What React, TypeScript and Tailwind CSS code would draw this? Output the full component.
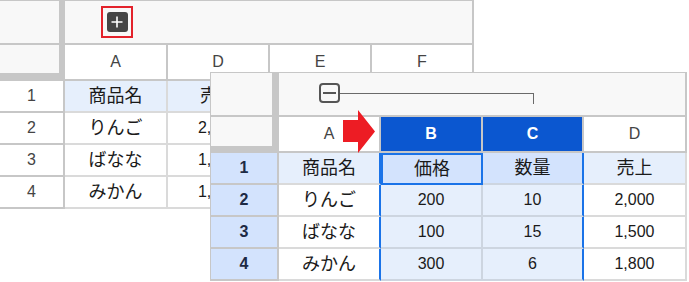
import React from "react";

const W1_COLS = [
  { key: "A", w: "w-[103px]" },
  { key: "D", w: "w-[102px]" },
  { key: "E", w: "w-[102px]" },
  { key: "F", w: "w-[102px]" },
];

const w1Rows = [
  { n: "1", a: "商品名", d: "売上", hl: true },
  { n: "2", a: "りんご", d: "2,000", hl: false },
  { n: "3", a: "ばなな", d: "1,500", hl: false },
  { n: "4", a: "みかん", d: "1,800", hl: false },
];

const w2Rows = [
  { n: "1", a: "商品名", b: "価格", c: "数量", d: "売上" },
  { n: "2", a: "りんご", b: "200", c: "10", d: "2,000" },
  { n: "3", a: "ばなな", b: "100", c: "15", d: "1,500" },
  { n: "4", a: "みかん", b: "300", c: "6", d: "1,800" },
];

function isCJK(s: string) {
  return /[^\x00-\x7F]/.test(s);
}

function Txt({ s }: { s: string }) {
  return (
    <span className={isCJK(s) ? "text-[18px] leading-none" : "text-[16px] leading-none"}>{s}</span>
  );
}

function BackSheet() {
  return (
    <div className="absolute left-0 top-0 w-[474px] z-0">
      {/* group row */}
      <div className="flex h-[45px]">
        <div className="w-[65px] h-full bg-[#c7c7c7] pt-px">
          <div className="w-[59px] h-[42px] bg-[#f8f8f8]" />
        </div>
        <div className="flex-1 h-full bg-[#f8f8f8] border-t border-r-2 border-b-2 border-[#c7c7c7] pl-[36px] pt-[5px]">
          <div className="w-[32px] h-[32px] border-2 border-[#e3222b] flex items-center justify-center">
            <div className="w-[21px] h-[20px] rounded-[3px] bg-[#454545] flex items-center justify-center">
              <svg width="12" height="12" viewBox="0 0 12 12">
                <path d="M6 0.5V11.5M0.5 6H11.5" stroke="#ffffff" strokeWidth="1.6" fill="none" />
              </svg>
            </div>
          </div>
        </div>
      </div>
      {/* header row */}
      <div className="flex h-[36px]">
        <div className="w-[65px] h-full bg-[#c7c7c7]">
          <div className="w-[59px] h-[28px] bg-[#f8f8f8]" />
        </div>
        {W1_COLS.map((c) => (
          <div
            key={c.key}
            className={`${c.w} h-full bg-white border-r-2 border-b-2 border-[#c7c7c7] flex items-center justify-center text-[16px] text-[#444]`}
          >
            {c.key}
          </div>
        ))}
      </div>
      {/* data rows */}
      {w1Rows.map((r) => (
        <div key={r.n} className="flex h-[32px]">
          <div className="w-[65px] h-full bg-white border-r-2 border-b-2 border-[#c7c7c7] flex items-center justify-center text-[16px] text-[#444]">
            {r.n}
          </div>
          <div className={`w-[103px] h-full border-r-2 border-b-2 border-[#dadada] flex items-center justify-center text-[#1a1a1a] ${r.hl ? "bg-[#e6effc]" : "bg-white"}`}>
            <Txt s={r.a} />
          </div>
          <div className={`w-[102px] h-full border-r-2 border-b-2 border-[#dadada] flex items-center justify-center text-[#1a1a1a] ${r.hl ? "bg-[#e6effc]" : "bg-white"}`}>
            <Txt s={r.d} />
          </div>
          <div className={`w-[102px] h-full border-r-2 border-b-2 border-[#dadada] ${r.hl ? "bg-[#e6effc]" : "bg-white"}`} />
          <div className={`w-[102px] h-full border-r-2 border-b-2 border-[#dadada] ${r.hl ? "bg-[#e6effc]" : "bg-white"}`} />
        </div>
      ))}
    </div>
  );
}

function FrontSheet() {
  return (
    <div className="absolute left-[210px] top-[72px] w-[477px] border-l border-t border-[#c7c7c7] bg-white z-10">
      {/* group row */}
      <div className="flex h-[44px]">
        <div className="w-[68px] h-full bg-[#c7c7c7]">
          <div className="w-[61px] h-[42px] bg-[#f8f8f8]" />
        </div>
        <div className="flex-1 h-full bg-[#f8f8f8] border-r-2 border-b-2 border-[#c7c7c7] pl-[40px] pt-[10px] flex items-start">
          <div className="w-[21px] h-[20px] border-2 border-[#555] rounded-[4px] bg-[#f8f8f8] flex items-center justify-center shrink-0">
            <div className="w-[13px] h-[2px] bg-[#555]" />
          </div>
          <div className="mt-[10px] w-[194px] h-[11px] border-t border-r border-[#6a6a6a] shrink-0" />
        </div>
      </div>
      {/* header row */}
      <div className="flex h-[36px]">
        <div className="w-[68px] h-full bg-[#c7c7c7]">
          <div className="w-[61px] h-[29px] bg-[#f8f8f8]" />
        </div>
        <div className="w-[102px] h-full bg-white border-r-2 border-b-2 border-[#c7c7c7] flex items-center justify-center text-[16px] text-[#444]">
          A
        </div>
        <div className="w-[102px] h-full bg-[#0b57d0] border-r-2 border-b-2 border-[#c7c7c7] flex items-center justify-center text-[16px] font-bold text-white">
          B
        </div>
        <div className="w-[101px] h-full bg-[#0b57d0] border-r-2 border-b-2 border-[#c7c7c7] flex items-center justify-center text-[16px] font-bold text-white">
          C
        </div>
        <div className="w-[103px] h-full bg-white border-r-2 border-b-2 border-[#c7c7c7] flex items-center justify-center text-[16px] text-[#444]">
          D
        </div>
      </div>
      {/* data rows */}
      {w2Rows.map((r, i) => {
        const first = i === 0;
        return (
          <div key={r.n} className="flex h-[32px]">
            <div className="w-[68px] h-full bg-[#d3e3fd] border-r-2 border-b-2 border-[#c7c7c7] flex items-center justify-center text-[16px] font-bold text-[#1d2a44]">
              {r.n}
            </div>
            <div className={`w-[102px] h-full border-b-2 border-b-[#dadada] border-r-2 border-r-[#1a73e8] flex items-center justify-center text-[#1a1a1a] ${first ? "bg-[#e6effc]" : "bg-white"}`}>
              <Txt s={r.a} />
            </div>
            {first ? (
              <div className="w-[102px] h-full border-2 border-[#1a73e8] bg-[#d3e3fd] flex items-center justify-center text-[#1a1a1a]">
                <Txt s={r.b} />
              </div>
            ) : (
              <div className="w-[102px] h-full border-r-2 border-b-2 border-[#cdd5e0] bg-[#e6effc] flex items-center justify-center text-[#1a1a1a]">
                <Txt s={r.b} />
              </div>
            )}
            <div className={`w-[101px] h-full border-b-2 border-b-[#cdd5e0] border-r-2 border-r-[#1a73e8] flex items-center justify-center text-[#1a1a1a] ${first ? "bg-[#d3e3fd]" : "bg-[#e6effc]"}`}>
              <Txt s={r.c} />
            </div>
            <div className={`w-[103px] h-full border-r-2 border-b-2 border-[#dadada] flex items-center justify-center text-[#1a1a1a] ${first ? "bg-[#e6effc]" : "bg-white"}`}>
              <Txt s={r.d} />
            </div>
          </div>
        );
      })}
    </div>
  );
}

export default function App() {
  return (
    <div className="relative w-[689px] h-[282px] overflow-hidden bg-white font-['Liberation_Sans','Noto_Sans_CJK_JP',sans-serif]">
      <BackSheet />
      <FrontSheet />
      <svg
        className="absolute left-[343px] top-[110px] z-20"
        width="32"
        height="43"
        viewBox="0 0 32 43"
      >
        <path d="M0 10H15V0L32 21.5L15 43V32H0Z" fill="#ed1c24" />
      </svg>
    </div>
  );
}
